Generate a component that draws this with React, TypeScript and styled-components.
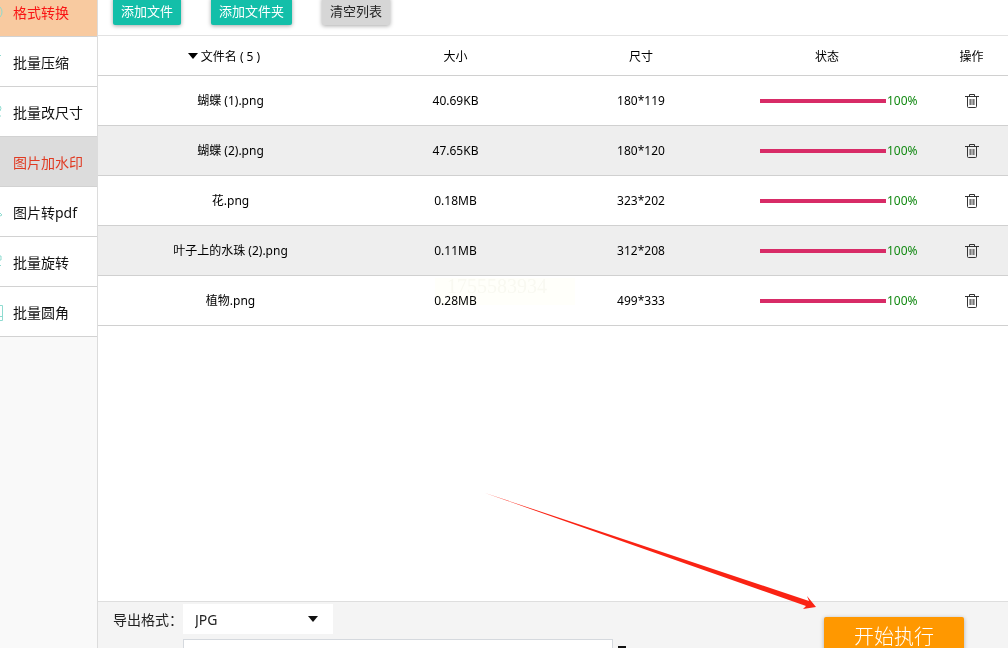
import React from "react";
import styled, { createGlobalStyle } from "styled-components";

const GlobalStyle = createGlobalStyle`
  * { box-sizing: border-box; }
  html, body { margin: 0; height: 100%; overflow: hidden; }
  body, button, select, input {
    font-family: "Noto Sans", "Noto Sans CJK SC", sans-serif;
  }
  #root { height: 100%; }
`;

const Shell = styled.div`
  position: relative;
  display: flex;
  height: calc(100vh + 13px);
  margin-top: -13px;
  overflow: hidden;
  background: #fff;
`;

const Sidebar = styled.nav`
  flex: 0 0 98px;
  background: #f9f9f9;
  border-right: 1px solid #dcdcdc;
`;

const NavItem = styled.a<{ $bg?: string; $color?: string }>`
  display: flex;
  align-items: center;
  height: 50px;
  padding-top: 2px;
  border-bottom: 1px solid #d2d2d2;
  background: ${(p) => p.$bg ?? "#fff"};
  color: ${(p) => p.$color ?? "#111"};
  font-size: 14px;
  line-height: 20px;
  white-space: nowrap;
  text-decoration: none;
`;

const NavIcon = styled.svg`
  flex: 0 0 13px;
  width: 13px;
  height: 20px;
`;

const Main = styled.main`
  flex: 1;
  min-width: 0;
  display: flex;
  flex-direction: column;
`;

const Toolbar = styled.div`
  display: flex;
  align-items: flex-end;
  flex: 0 0 49px;
  padding: 0 15px 10px;
  border-bottom: 1px solid #e2e2e2;
`;

const ToolButton = styled.button<{ $plain?: boolean }>`
  height: 28px;
  margin-right: 30px;
  padding: 0 8px;
  border: 0;
  border-radius: 2px;
  background: ${(p) => (p.$plain ? "#d6d6d6" : "#13bfa9")};
  color: ${(p) => (p.$plain ? "#222" : "#fff")};
  font-size: 13px;
  line-height: 20px;
  box-shadow: 0 1px 4px rgba(0, 0, 0, 0.35);
`;

const FileTable = styled.table`
  width: 100%;
  table-layout: fixed;
  border-collapse: separate;
  border-spacing: 0;
  font-size: 12px;
  line-height: 18px;
  color: #000;
  text-align: center;
`;

const Col = styled.col<{ $w?: string }>`
  width: ${(p) => p.$w ?? "auto"};
`;

const HeadCell = styled.th<{ $kind?: "name" | "action" }>`
  height: 40px;
  padding: 2px ${(p) => (p.$kind === "name" ? "13px" : "0")} 0
    ${(p) => (p.$kind === "action" ? "15px" : "0")};
  border-bottom: 1px solid #d0d0d0;
  font-weight: 400;
`;

const Row = styled.tr`
  &:nth-child(even) { background: #eee; }
`;

const Cell = styled.td<{ $last?: boolean }>`
  height: 50px;
  padding: 1px 0 0 ${(p) => (p.$last ? "15px" : "0")};
  border-bottom: 1px solid #d0d0d0;
`;

const SortMark = styled.svg`
  width: 10px;
  height: 6px;
  margin-right: 3px;
  vertical-align: 2px;
`;

const Status = styled.div`
  display: flex;
  align-items: center;
  gap: 1px;
  padding-left: 26px;
  color: #138a13;
`;

const Track = styled.div`
  width: 126px;
  height: 4px;
  background: #eee;
`;

const Fill = styled.div`
  height: 4px;
  background: #d82b67;
`;

const DeleteButton = styled.button`
  display: flex;
  margin: 0 auto;
  padding: 0;
  border: 0;
  background: none;
`;

const Footer = styled.footer`
  display: flex;
  justify-content: space-between;
  flex: 0 0 47px;
  min-height: 0;
  height: 47px;
  margin-top: auto;
  padding: 2px 44px 0 15px;
  border-top: 1px solid #dedede;
  background: #f4f4f4;
  overflow: hidden;
`;

const Options = styled.div`
  display: grid;
  grid-template-columns: 70px 430px auto;
  row-gap: 3px;
  align-content: start;
`;

const Label = styled.label`
  font-size: 14px;
  line-height: 32px;
  color: #222;
  white-space: nowrap;
`;

const SelectBox = styled.div`
  display: flex;
  align-items: center;
  width: 150px;
  height: 30px;
  padding-right: 15px;
  background: #fff;
`;

const Select = styled.select`
  flex: 1;
  min-width: 0;
  height: 30px;
  padding: 0 0 0 12px;
  border: 0;
  background: transparent;
  color: #222;
  font-size: 14px;
  appearance: none;
`;

const PathInput = styled.input`
  grid-column: 2;
  height: 30px;
  border: 1px solid #d5d9de;
  background: #fff;
`;

const Ellipsis = styled.div`
  width: 8px;
  height: 2px;
  margin: 7px 0 0 5px;
  background: #111;
`;

const StartButton = styled.button`
  flex: 0 0 140px;
  height: 40px;
  margin-top: 13px;
  padding: 0;
  border: 0;
  border-radius: 2px;
  background: #ff9800;
  color: #fff;
  font-size: 20px;
  font-weight: 300;
  line-height: 30px;
  box-shadow: 0 1px 4px rgba(0, 0, 0, 0.3);
`;

const Stamp = styled.div`
  position: absolute;
  left: 435px;
  top: 291px;
  width: 140px;
  height: 27px;
  padding-left: 12px;
  background: #fffffa;
  color: #f9f9f1;
  font: 20px/16px "Liberation Serif", serif;
  mix-blend-mode: multiply;
  pointer-events: none;
`;

const Arrow = styled.svg`
  position: absolute;
  left: 484px;
  top: 505px;
  width: 334px;
  height: 120px;
  pointer-events: none;
`;

const nav = [
  { label: "格式转换", bg: "#f8caa0", color: "#f91414", icon: "M0 4Q2 6 2 9T0 14" },
  { label: "批量压缩", icon: "M0 3L1 2" },
  { label: "批量改尺寸", icon: "M0 3Q2 5 0 8M0 13h1" },
  { label: "图片加水印", bg: "#dcdcdc", color: "#e03a22", icon: "" },
  { label: "图片转pdf", icon: "M0 10L2 12L0 13" },
  { label: "批量旋转", icon: "M0 3H1V7H0M0 13L1 12" },
  { label: "批量圆角", icon: "M0 2.5H2.5V17.5H0M0 13.5H2" },
];

const files = [
  { name: "蝴蝶 (1).png", size: "40.69KB", dim: "180*119", progress: 100 },
  { name: "蝴蝶 (2).png", size: "47.65KB", dim: "180*120", progress: 100 },
  { name: "花.png", size: "0.18MB", dim: "323*202", progress: 100 },
  { name: "叶子上的水珠 (2).png", size: "0.11MB", dim: "312*208", progress: 100 },
  { name: "植物.png", size: "0.28MB", dim: "499*333", progress: 100 },
];

const TrashIcon = () => (
  <svg width="14" height="14" viewBox="0 0 14 14" fill="none" stroke="#333" aria-hidden="true">
    <rect x="4" y="5" width="6" height="6" fill="#aaa" stroke="none" />
    <path d="M0 2.5H14M4.5 2V.5H9.5V2M2.5 3V12.5Q2.5 13.5 3.5 13.5H10.5Q11.5 13.5 11.5 12.5V3" />
    <path d="M5.5 5V11M8.5 5V11" stroke="#777" />
  </svg>
);

export default function App() {
  return (
    <>
      <GlobalStyle />
      <Shell>
        <Sidebar>
          {nav.map((n) => (
            <NavItem key={n.label} href="#" $bg={n.bg} $color={n.color}>
              <NavIcon viewBox="0 0 13 20" fill="none" stroke="#8edbd0" aria-hidden="true">
                <path d={n.icon} />
              </NavIcon>
              {n.label}
            </NavItem>
          ))}
        </Sidebar>
        <Main>
          <Toolbar>
            <ToolButton>添加文件</ToolButton>
            <ToolButton>添加文件夹</ToolButton>
            <ToolButton $plain>清空列表</ToolButton>
          </Toolbar>
          <FileTable>
            <colgroup>
              <Col />
              <Col $w="185px" />
              <Col $w="186px" />
              <Col $w="186px" />
              <Col $w="88px" />
            </colgroup>
            <thead>
              <tr>
                <HeadCell $kind="name">
                  <SortMark viewBox="0 0 10 6" aria-hidden="true">
                    <path d="M0 0H10L5 6Z" />
                  </SortMark>
                  文件名 ( 5 )
                </HeadCell>
                <HeadCell>大小</HeadCell>
                <HeadCell>尺寸</HeadCell>
                <HeadCell>状态</HeadCell>
                <HeadCell $kind="action">操作</HeadCell>
              </tr>
            </thead>
            <tbody>
              {files.map((f) => (
                <Row key={f.name}>
                  <Cell>{f.name}</Cell>
                  <Cell>{f.size}</Cell>
                  <Cell>{f.dim}</Cell>
                  <Cell>
                    <Status>
                      <Track>
                        <Fill style={{ width: `${f.progress}%` }} />
                      </Track>
                      {f.progress}%
                    </Status>
                  </Cell>
                  <Cell $last>
                    <DeleteButton aria-label="删除">
                      <TrashIcon />
                    </DeleteButton>
                  </Cell>
                </Row>
              ))}
            </tbody>
          </FileTable>
          <Footer>
            <Options>
              <Label htmlFor="format">导出格式：</Label>
              <SelectBox>
                <Select id="format" defaultValue="JPG">
                  <option>JPG</option>
                </Select>
                <svg width="10" height="6" viewBox="0 0 10 6" aria-hidden="true">
                  <path d="M0 0H10L5 6Z" fill="#111" />
                </svg>
              </SelectBox>
              <span />
              <PathInput aria-label="输出目录" />
              <Ellipsis />
            </Options>
            <StartButton>开始执行</StartButton>
          </Footer>
        </Main>
        <Stamp>1755583934</Stamp>
        <Arrow viewBox="0 0 334 120" aria-hidden="true">
          <path d="M1 1L325 109L323 104L332 115L319 117L322 114Z" fill="#fa2314" />
        </Arrow>
      </Shell>
    </>
  );
}
